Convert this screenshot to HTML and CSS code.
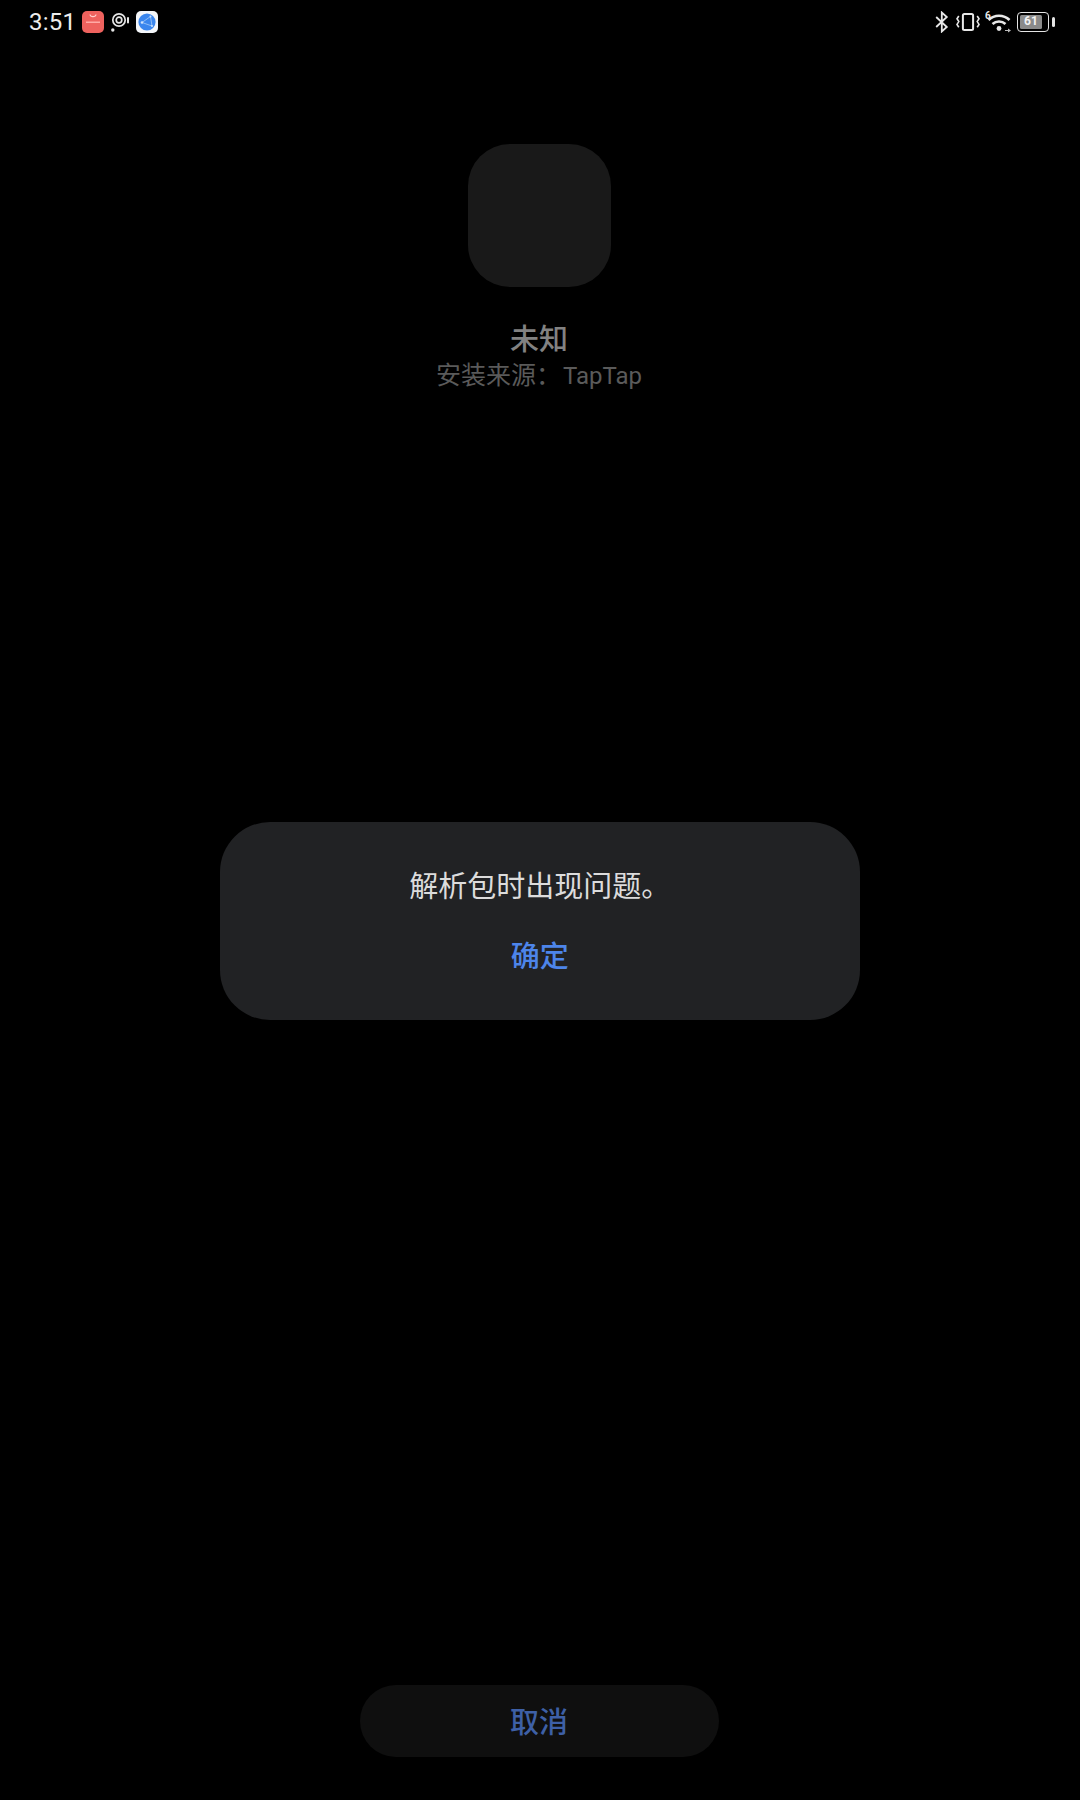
FILE: index.html
```html
<!DOCTYPE html>
<html lang="zh-CN">
<head>
<meta charset="utf-8">
<title>安装</title>
<link rel="stylesheet" href="styles.css">
</head>
<body>
<div class="screen">
  <header class="status">
    <div class="status-left">
      <span class="time">3:51</span>
      <svg class="ic-store" viewBox="0 0 22 22"><rect width="22" height="22" rx="5" fill="#ee625e"/><path d="M8 3.500c.4 2.800 5.600 2.800 6 0" fill="none" stroke="#ffd0cc" stroke-width="1.100"/><rect x="4" y="10.500" width="14" height="1.500" fill="#ffaaa5"/></svg>
      <svg class="ic-cam" viewBox="0 0 20 22"><circle cx="8" cy="9" r="6.200" fill="none" stroke="#e6e6e6" stroke-width="1.700"/><circle cx="8" cy="9" r="2.800" fill="none" stroke="#e6e6e6" stroke-width="1.700"/><rect x="16" y="6" width="2" height="6.500" rx="1" fill="#e6e6e6"/><circle cx="1.800" cy="19" r="1.700" fill="#e6e6e6"/></svg>
      <svg class="ic-browser" viewBox="0 0 22 22"><rect width="22" height="22" rx="5" fill="#f4f6f9"/><circle cx="11" cy="11" r="8.600" fill="#3a86ee"/><path d="M6 11.500L14.500 5.500M6 11.500l10 3.500M14.500 5.500L16 15" stroke="#8fbdf6" stroke-width="1" fill="none"/><circle cx="6" cy="11.500" r="1.300" fill="#cfe3fc"/><circle cx="14.500" cy="5.500" r="1" fill="#cfe3fc"/><circle cx="16" cy="15" r="1" fill="#cfe3fc"/></svg>
    </div>
    <div class="status-right">
      <svg class="ic-bt" viewBox="0 0 14 22"><path d="M1.200 6l10.600 10-5 4.500V1.500l5 4.500L1.200 16" fill="none" stroke="#e8e8e8" stroke-width="1.800"/></svg>
      <svg class="ic-vib" viewBox="0 0 24 22"><rect x="6.900" y="2.900" width="10.200" height="16.200" rx="1.500" fill="none" stroke="#e8e8e8" stroke-width="2"/><path d="M2.800 5l-1.800 2.800 1.800 2.800-1.800 2.800 1.800 2.800M21.200 5l1.800 2.800-1.800 2.800 1.800 2.800-1.800 2.800" fill="none" stroke="#e8e8e8" stroke-width="1.600"/></svg>
      <svg class="ic-wifi" viewBox="0 0 26 24"><text x="0" y="9" class="wifi-six">6</text><path d="M3.500 10A15 15 0 0 1 24.500 10M7.500 14A9.500 9.500 0 0 1 20.500 14" fill="none" stroke="#e8e8e8" stroke-width="2.600"/><circle cx="14" cy="18.500" r="2.400" fill="#e8e8e8"/><path d="M20 20.500h3" stroke="#bbb" stroke-width="1"/><path d="M23 18.500v4l3-2z" fill="#bbb"/></svg>
      <div class="battery">
        <div class="battery-body"><span class="battery-fill">61</span></div>
        <div class="battery-tip"></div>
      </div>
    </div>
  </header>

  <main class="app-info">
    <div class="app-icon"></div>
    <div class="app-name">未知</div>
    <div class="app-source">安装来源：<span class="latin">TapTap</span></div>
  </main>

  <footer class="actions">
    <button class="cancel">取消</button>
  </footer>

  <div class="dialog">
    <p class="dialog-msg">解析包时出现问题。</p>
    <button class="dialog-ok">确定</button>
  </div>
</div>
</body>
</html>
```
FILE: styles.css
```css
* { box-sizing: border-box; }
html, body { margin: 0; padding: 0; background: #000; }
body { font-family: "Noto Sans CJK SC", "Noto Sans", sans-serif; }
.screen { position: relative; width: 1080px; height: 1800px; background: #000; display: flex; flex-direction: column; overflow: hidden; }

.status { height: 44px; padding: 0 25px 0 29px; display: flex; justify-content: space-between; align-items: center; flex: none; }
.status-left, .status-right { display: flex; align-items: center; }
.time { font-family: Roboto, sans-serif; font-size: 24px; color: #ececec; width: 53px; letter-spacing: .2px; }
.ic-store { width: 22px; height: 22px; margin-right: 7px; }
.ic-cam { width: 20px; height: 22px; margin-right: 5px; }
.ic-browser { width: 22px; height: 22px; }
.ic-bt { width: 14px; height: 22px; margin-right: 7px; }
.ic-vib { width: 24px; height: 22px; margin-right: 5px; }
.ic-wifi { width: 26px; height: 24px; margin-right: 6px; }
.wifi-six { font-family: Roboto, sans-serif; font-size: 10px; font-weight: 700; fill: #e8e8e8; }
.battery { display: flex; align-items: center; }
.battery-body { width: 32px; height: 20px; border: 1.500px solid #e4e4e4; border-radius: 4px; padding: 2px; display: flex; }
.battery-fill { width: 22px; background: #8a8a8a; border-radius: 1.500px; font-family: Roboto, sans-serif; font-size: 12px; font-weight: 700; line-height: 13px; color: #f2f2f2; text-align: center; }
.battery-tip { width: 3px; height: 10px; margin-left: 3px; background: #e4e4e4; border-radius: 1.500px; }

.app-info { display: flex; flex-direction: column; align-items: center; padding: 100px 2px 0 0; flex: 1; }
.app-icon { width: 143px; height: 143px; border-radius: 42px; background: #191919; }
.app-name { margin-top: 31px; font-size: 29px; font-weight: 500; line-height: 38px; color: #828282; }
.app-source { font-size: 25px; line-height: 35px; color: #5a5a5a; }
.latin { font-family: Roboto, sans-serif; font-size: 24px; margin-left: 2px; }

.actions { display: flex; justify-content: center; padding: 0 2px 43px 0; flex: none; }
.cancel { width: 359px; height: 72px; border: 0; border-radius: 36px; background: #0f0f0f; color: #3e60a6; font: inherit; font-size: 29px; font-weight: 500; padding: 0 0 2px; }

.dialog { position: absolute; left: 219.500px; top: 822px; width: 640.500px; height: 198px; border-radius: 50px; background: #212224; display: flex; flex-direction: column; align-items: center; padding-top: 41px; }
.dialog-msg { margin: 0; font-size: 29px; line-height: 42px; color: #dcdcdc; }
.dialog-ok { margin-top: 28px; border: 0; background: none; color: #4d85ea; font: inherit; font-size: 29px; font-weight: 500; line-height: 42px; padding: 0; }
```
